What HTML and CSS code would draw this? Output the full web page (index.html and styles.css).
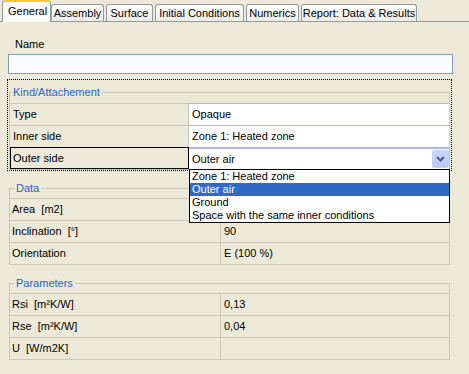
FILE: index.html
```html
<!DOCTYPE html>
<html lang="en">
<head>
    <meta charset="UTF-8">
    <title>Wall properties</title>
    <link rel="stylesheet" href="styles.css">
</head>
<body>

    <!-- Tabs -->
    <div class="tabs">
        <div class="tab selected tab-general">General</div>
        <div class="tab tab-assembly">Assembly</div>
        <div class="tab tab-surface">Surface</div>
        <div class="tab tab-initial">Initial Conditions</div>
        <div class="tab tab-numerics">Numerics</div>
        <div class="tab tab-report">Report: Data &amp; Results</div>
    </div>

    <div class="panel">
        <div class="name-label">Name</div>
        <div class="name-input"></div>

        <!-- Kind / Attachement -->
        <div class="focus-box">
            <fieldset class="group group-kind">
                <legend>Kind/Attachement</legend>
                <div class="row kind-row">
                    <div class="cell label">Type</div>
                    <div class="cell value">Opaque</div>
                </div>
                <div class="row kind-row">
                    <div class="cell label">Inner side</div>
                    <div class="cell value">Zone 1: Heated zone</div>
                </div>
                <div class="row kind-row">
                    <div class="cell label focused">Outer side</div>
                    <div class="cell value combo-cell">
                        <div class="combo">
                            <span>Outer air</span>
                            <span class="combo-button">
                                <svg width="9" height="6" viewBox="0 0 9 6">
                                    <polyline points="1,1 4.5,4.5 8,1" fill="none" stroke="#4d6185" stroke-width="2"/>
                                </svg>
                            </span>
                        </div>
                        <ul class="dropdown">
                            <li>Zone 1: Heated zone</li>
                            <li class="active">Outer air</li>
                            <li>Ground</li>
                            <li>Space with the same inner conditions</li>
                        </ul>
                    </div>
                </div>
            </fieldset>
        </div>

        <!-- Data -->
        <fieldset class="group group-data">
            <legend>Data</legend>
            <div class="row data-row">
                <div class="cell label">Area&nbsp; [m2]</div>
                <div class="cell value"></div>
            </div>
            <div class="row data-row">
                <div class="cell label">Inclination&nbsp; [°]</div>
                <div class="cell value">90</div>
            </div>
            <div class="row data-row">
                <div class="cell label">Orientation</div>
                <div class="cell value">E (100 %)</div>
            </div>
        </fieldset>

        <!-- Parameters -->
        <fieldset class="group group-params">
            <legend>Parameters</legend>
            <div class="row data-row">
                <div class="cell label">Rsi&nbsp; [m²K/W]</div>
                <div class="cell value">0,13</div>
            </div>
            <div class="row data-row">
                <div class="cell label">Rse&nbsp; [m²K/W]</div>
                <div class="cell value">0,04</div>
            </div>
            <div class="row data-row">
                <div class="cell label">U&nbsp; [W/m2K]</div>
                <div class="cell value"></div>
            </div>
        </fieldset>
    </div>

</body>
</html>
```

FILE: styles.css
```css
body {
    margin: 0;
    padding: 0;
    background-color: #ece9d8;
    font-family: "Liberation Sans", Arial, sans-serif;
    font-size: 11px;
    color: #000000;
}

/* Tabs */
.tabs {
    display: flex;
    align-items: flex-end;
    gap: 2px;
    height: 21px;
    padding-left: 2px;
    border-bottom: 1px solid #919b9c;
}

.tab {
    box-sizing: border-box;
    height: 17px;
    line-height: 16px;
    text-align: center;
    white-space: nowrap;
    border: 1px solid #919b9c;
    border-bottom: none;
    border-radius: 3px 3px 0 0;
    background: linear-gradient(to bottom, #ffffff, #ecebe6);
}

.tab.selected {
    height: 22px;
    line-height: 19px;
    margin-bottom: -1px;
    margin-right: -2px;
    border-top: 2px solid #ffc83c;
    background: #fcfcfa;
    text-align: left;
    padding-left: 5px;
}

.tab-general { width: 49px; }
.tab-assembly { width: 53px; }
.tab-surface { width: 47px; }
.tab-initial { width: 89px; }
.tab-numerics { width: 53px; }
.tab-report { width: 116px; }

/* Panel */
.panel {
    padding-left: 8px;
}

.name-label {
    margin-top: 16px;
    margin-left: 7px;
    line-height: 13px;
}

.name-input {
    box-sizing: border-box;
    width: 445px;
    height: 20px;
    margin-top: 3px;
    border: 1px solid #7f9db9;
    background-color: #fafcff;
}

.focus-box {
    box-sizing: border-box;
    width: 445px;
    margin-top: 5px;
    margin-left: -1px;
    padding-top: 6px;
    border: 1px dotted #000000;
}

/* Group boxes */
.group {
    box-sizing: border-box;
    width: 441px;
    margin: 0 0 0 1px;
    padding: 3px 0 0 0;
    border: 1px solid #cac7b7;
    min-width: 0;
}

.group legend {
    padding: 0 2px;
    margin-left: 4px;
    line-height: 13px;
    color: #2c62c4;
}

.group-kind {
    padding-top: 4px;
}

.group-kind legend {
    margin-left: 1px;
}

.group-data {
    margin-top: 11px;
}

.group-params {
    margin-top: 12px;
}

/* Rows */
.row {
    display: grid;
    height: 22px;
}

.kind-row {
    grid-template-columns: 179px 1fr;
}

.data-row {
    grid-template-columns: 211px 1fr;
}

.cell {
    box-sizing: border-box;
    border-top: 1px solid #cac7b7;
    line-height: 21px;
    white-space: nowrap;
}

.label {
    border-right: 1px solid #cac7b7;
}

.kind-row .label {
    padding-left: 3px;
}

.kind-row .value {
    padding-left: 3px;
    background-color: #ffffff;
    border-top-color: #bdbbb0;
}

.data-row .label {
    padding-left: 2px;
}

.data-row .value {
    padding-left: 3px;
}

.label.focused {
    border-top-color: #000000;
    border-right-color: #000000;
    box-shadow: inset 1px 0 0 #000000, inset 0 -1px 0 #000000;
}

/* Combo box */
.combo-cell {
    position: relative;
    padding-left: 0;
}

.kind-row .combo-cell {
    padding-left: 0;
}

.combo {
    box-sizing: border-box;
    display: flex;
    justify-content: space-between;
    height: 21px;
    padding-left: 3px;
    border-top: 1px solid #a9bcdc;
    line-height: 20px;
}

.combo-button {
    box-sizing: border-box;
    display: flex;
    align-items: center;
    justify-content: center;
    width: 17px;
    height: 18px;
    margin-top: 1px;
    border: 1px solid #c6d3f5;
    border-radius: 2px;
    background: linear-gradient(to bottom, #cad7fb, #b6c8f5);
}

.dropdown {
    position: absolute;
    top: 100%;
    left: 0;
    z-index: 2;
    box-sizing: border-box;
    width: 261px;
    margin: 0;
    padding: 0;
    list-style: none;
    border: 1px solid #000000;
    background-color: #ffffff;
}

.dropdown li {
    height: 13px;
    line-height: 13px;
    padding-left: 2px;
}

.dropdown li.active {
    background-color: #316ac5;
    color: #ffffff;
}
```
